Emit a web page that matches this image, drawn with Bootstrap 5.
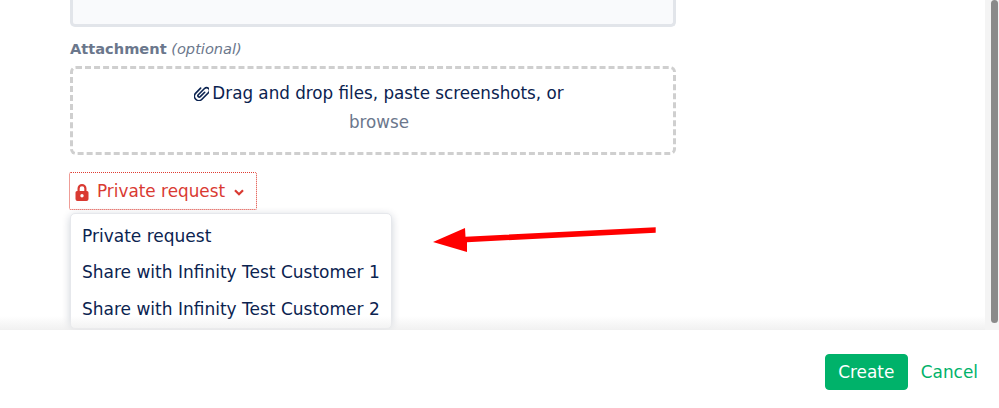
<!DOCTYPE html>
<html lang="en">
<head>
  <meta charset="UTF-8" />
  <meta name="viewport" content="width=device-width, initial-scale=1.0" />
  <title>Create request</title>
  <link href="https://cdn.jsdelivr.net/npm/bootstrap@5.3.3/dist/css/bootstrap.min.css" rel="stylesheet">
  <style>
    html, body {
      height: 408px;
      overflow: hidden;
    }
    body {
      font-family: "DejaVu Sans", sans-serif;
      font-size: 16.9px;
      color: #0b2350;
      background: #fff;
    }
    .form-area {
      height: 330px;
      overflow: hidden;
      position: relative;
    }
    .form-col {
      width: 606px;
      margin-left: 70px;
    }
    .desc-box {
      height: 27px;
      background: #f9fafc;
      border: 3px solid #e2e5ea;
      border-top: 0;
      border-radius: 0 0 5px 5px;
    }
    .attach-label {
      margin-top: 12px;
      height: 19px;
      line-height: 19px;
      font-size: 14.6px;
      color: #6b778c;
    }
    .attach-label i {
      font-weight: 400;
    }
    .drop-zone {
      height: 89px;
      margin-top: 8px;
      border: 3px dashed #cfcfcf;
      border-radius: 6px;
      text-align: center;
      line-height: 29px;
      padding: 10px 0 0 12px;
      font-size: 16.75px;
    }
    .browse-link {
      color: #6b778c;
    }
    .clip-icon {
      vertical-align: -2px;
      margin-right: 3px;
    }
    .private-toggle {
      margin-top: 17px;
      height: 38px;
      width: 188px;
      margin-left: -1px;
      padding: 2px 0 0 5px;
      border: 1px dotted #e03c31;
      border-radius: 2px;
      background: none;
      color: #d93a32;
      font-size: 16.85px;
    }
    .lock-icon {
      margin-right: 8px;
    }
    .caret-icon {
      margin-left: 9px;
    }
    .private-menu {
      position: absolute;
      left: 70px;
      top: 213px;
      width: 322px;
      padding: 3.5px 0 .5px;
      border: 1px solid #e6e8ec;
      border-radius: 5px;
      background: #fff;
      box-shadow: 0 2px 8px rgba(9, 30, 66, .2);
      font-size: 17px;
    }
    .private-item {
      height: 36.5px;
      line-height: 36px;
      padding-left: 11px;
      white-space: nowrap;
    }
    .fade-bottom {
      position: absolute;
      left: 0;
      right: 14px;
      bottom: 0;
      height: 14px;
      background: linear-gradient(rgba(240, 240, 240, 0), rgba(236, 236, 236, .75));
      pointer-events: none;
    }
    .scroll-track {
      position: absolute;
      top: 0;
      right: 0;
      bottom: 0;
      width: 14px;
      background: #f4f4f4;
    }
    .scroll-thumb {
      position: absolute;
      top: 0;
      left: 6px;
      width: 7px;
      height: 323px;
      border-radius: 4px;
      background: #8a8a8a;
    }
    .form-footer {
      height: 78px;
      padding: 24px 21px 0 0;
      gap: 13px;
    }
    .btn-create {
      width: 83px;
      height: 36px;
      padding: 0;
      line-height: 34px;
      background: #00b26a;
      border-color: #00b26a;
      color: #fff;
      font-size: 16.9px;
      border-radius: 4px;
    }
    .cancel-link {
      color: #00b26a;
      line-height: 36px;
      text-decoration: none;
    }
    .note-arrow {
      position: absolute;
      left: 430px;
      top: 222px;
    }
  </style>
</head>
<body>
  <div class="form-area">
    <div class="form-col">
      <div class="desc-box"></div>
      <div class="attach-label"><b>Attachment</b> <i>(optional)</i></div>
      <div class="drop-zone">
        <div>
          <svg class="clip-icon" width="15" height="15" viewBox="1 1 12 12" fill="none" stroke="#0b2350" stroke-width="1.3" stroke-linecap="round"><path transform="rotate(45 7 7)" d="M3.500 4.500v5.500a3.500 3.500 0 0 0 7 0V2.500a2.300 2.300 0 0 0-4.600 0V9.500a1.100 1.100 0 0 0 2.200 0V4.500"/></svg><span>Drag and drop files, paste screenshots, or</span>
        </div>
        <div class="browse-link">browse</div>
      </div>
      <button type="button" class="private-toggle d-flex align-items-center">
        <svg class="lock-icon" width="14" height="17" viewBox="0 0 14 17"><path fill="#d93a32" fill-rule="evenodd" d="M2.500 7V4.500a4.500 4.500 0 0 1 9 0V7h.5A1.500 1.500 0 0 1 13.500 8.500v6.500A2 2 0 0 1 11.500 17h-9A2 2 0 0 1 .5 15V8.500A1.500 1.500 0 0 1 2 7h.5Zm2.200 0h4.600V4.500a2.300 2.300 0 0 0-4.600 0V7ZM7 10a1.700 1.700 0 1 0 0 3.400A1.700 1.700 0 0 0 7 10Z"/></svg>
        <span>Private request</span>
        <svg class="caret-icon" width="10" height="7" viewBox="0 0 10 7" fill="none" stroke="#d93a32" stroke-width="2.200"><path d="M1 1.200 5 5.200 9 1.200"/></svg>
      </button>
    </div>
    <div class="private-menu">
      <div class="private-item">Private request</div>
      <div class="private-item">Share with Infinity Test Customer 1</div>
      <div class="private-item">Share with Infinity Test Customer 2</div>
    </div>
    <svg class="note-arrow" width="230" height="34" viewBox="0 0 230 34"><path fill="#ff0000" d="M3 20 35 6 35.500 14.700 225.700 5.300 225.700 10.700 37 20.300 37 30Z"/></svg>
    <div class="fade-bottom"></div>
    <div class="scroll-track"><div class="scroll-thumb"></div></div>
  </div>
  <div class="form-footer d-flex justify-content-end align-items-start">
    <button type="button" class="btn btn-create">Create</button>
    <a href="#" class="cancel-link">Cancel</a>
  </div>
  <script src="https://cdn.jsdelivr.net/npm/bootstrap@5.3.3/dist/js/bootstrap.bundle.min.js"></script>
</body>
</html>
